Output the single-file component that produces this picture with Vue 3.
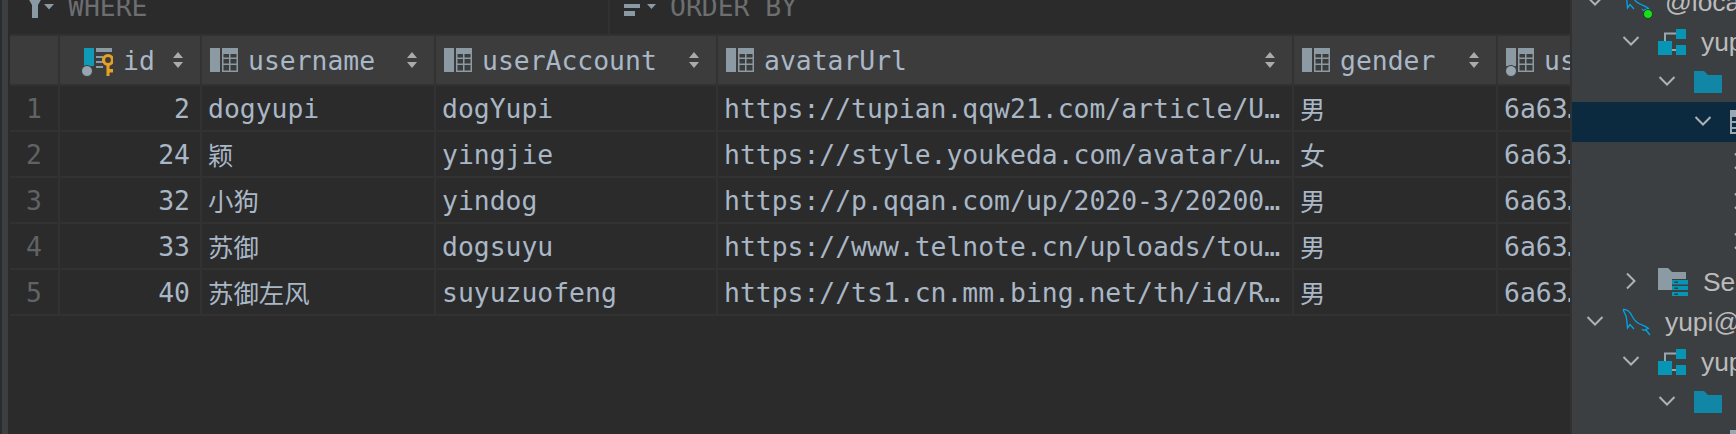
<script setup>
const columns = [
  { name: 'id', kind: 'pk' },
  { name: 'username', kind: 'col' },
  { name: 'userAccount', kind: 'col' },
  { name: 'avatarUrl', kind: 'col' },
  { name: 'gender', kind: 'col' },
  { name: 'userPassword', kind: 'req' }
]

const rows = [
  [2, 'dogyupi', 'dogYupi', 'https://tupian.qqw21.com/article/U…', '男', '6a63…'],
  [24, '颖', 'yingjie', 'https://style.youkeda.com/avatar/u…', '女', '6a63…'],
  [32, '小狗', 'yindog', 'https://p.qqan.com/up/2020-3/20200…', '男', '6a63…'],
  [33, '苏御', 'dogsuyu', 'https://www.telnote.cn/uploads/tou…', '男', '6a63…'],
  [40, '苏御左风', 'suyuzuofeng', 'https://ts1.cn.mm.bing.net/th/id/R…', '男', '6a63…']
]

const tree = [
  { depth: 0, open: true, icon: 'mysql', dot: true, text: '@localhost' },
  { depth: 1, open: true, icon: 'schema', text: 'yupi' },
  { depth: 2, open: true, icon: 'folder' },
  { depth: 3, open: true, icon: 'table', selected: true },
  { depth: 4 },
  { depth: 4 },
  { depth: 4 },
  { depth: 1, icon: 'server', text: 'Server Objects' },
  { depth: 0, open: true, icon: 'mysql', text: 'yupi@localhost' },
  { depth: 1, open: true, icon: 'schema', text: 'yupi' },
  { depth: 2, open: true, icon: 'folder' },
  { depth: 3, open: true, icon: 'table' }
]

const isCjk = (val) => /[\u4e00-\u9fff]/.test(String(val))
</script>

<template>
  <div class="page">
    <div class="stripe"></div>

    <div class="main">
      <div class="filters">
        <div class="filter where">
          <svg class="filter-icon" width="28" height="24" viewBox="0 0 28 24">
            <path d="M0 -6H15V-2L11 5V18H5V5L1 -2Z" fill="#8a9aa5" />
            <path d="M17 4H27L22 9.500Z" fill="#8a9aa5" />
          </svg>
          <span>WHERE</span>
        </div>
        <div class="filter">
          <svg class="filter-icon" width="33" height="24" viewBox="0 0 33 24">
            <path d="M0 4H16V8H0ZM0 11H11V16H0Z" fill="#8a9aa5" />
            <path d="M23 4H32L27.500 9Z" fill="#8a9aa5" />
          </svg>
          <span>ORDER BY</span>
        </div>
      </div>

      <div class="grid">
        <div class="cell head corner"></div>
        <div v-for="col in columns" :key="col.name" class="cell head" :class="{ 'head-pk': col.kind === 'pk' }">
          <svg v-if="col.kind === 'pk'" class="col-icon pk-icon" width="31" height="30" viewBox="0 0 31 30">
            <rect x="2" y="0" width="10" height="18" fill="#0f9ab8" />
            <circle cx="5" cy="23" r="5.500" fill="#95a6b0" stroke="#3c3c3c" stroke-width="1" />
            <path d="M14 0H30V4H14ZM14 8H21V10H14ZM14 13H21V15H14ZM14 18H21V20H14Z" fill="#8b9aa3" />
            <circle cx="26" cy="12" r="4.500" fill="none" stroke="#e5a125" stroke-width="3.200" />
            <path d="M24.500 16H27.500V28H24.500ZM27 21H31V24.500H27Z" fill="#e5a125" />
          </svg>
          <svg v-else class="col-icon" width="28" height="30" viewBox="0 0 28 30">
            <rect x="0" :height="col.kind === 'req' ? 18 : 24" width="10" fill="#8b9aa3" />
            <circle v-if="col.kind === 'req'" cx="5" cy="23" r="5.500" fill="#95a6b0" stroke="#3c3c3c" stroke-width="1" />
            <path d="M12 0H28V24H12ZM13.500 6V9.500H19V6ZM20.500 6V9.500H26.500V6ZM13.500 11V15.500H19V11ZM20.500 11V15.500H26.500V11ZM13.500 17V22.500H19V17ZM20.500 17V22.500H26.500V17Z" fill="#8b9aa3" fill-rule="evenodd" />
          </svg>
          <span class="head-name">{{ col.name }}</span>
          <svg class="sort" width="10" height="16" viewBox="0 0 10 16">
            <path d="M5 0L10 6H0ZM0 10H10L5 16Z" fill="#a9abad" />
          </svg>
        </div>

        <template v-for="(row, i) in rows" :key="i">
          <div class="cell row-no">{{ i + 1 }}</div>
          <div
            v-for="(val, j) in row"
            :key="j"
            class="cell"
            :class="{ num: j === 0, cjk: isCjk(val) }"
          >{{ val }}</div>
        </template>
      </div>
    </div>

    <div class="tree">
      <div
        v-for="(node, i) in tree"
        :key="i"
        class="tree-row"
        :class="{ selected: node.selected }"
        :style="{ paddingLeft: 14 + node.depth * 36 + 'px' }"
      >
        <svg class="chevron" width="18" height="18" viewBox="0 0 18 18">
          <path v-if="node.open" d="M1.500 5L9 12.500L16.500 5" />
          <path v-else d="M5 1.500L12.500 9L5 16.500" />
        </svg>

        <svg v-if="node.icon === 'mysql'" class="node-icon" width="28" height="28" viewBox="0 0 28 28">
          <path
            d="M1 1.500C5 1 8 4 10 8C12 12 15 15 19 16.500C21 17.500 24 18 26.500 20.500L23.500 21.500L28 27M23.500 21.500C22 23 21 22.500 20 21M1 1.500L4 8C5 12 5 15 5.500 20L8 16.500L12 21"
            fill="none"
            stroke="#00a5e6"
            stroke-width="1.300"
          />
          <circle v-if="node.dot" cx="26" cy="26" r="4.500" fill="#16e016" stroke="#2d3a2d" stroke-width="1" />
        </svg>
        <svg v-else-if="node.icon === 'schema'" class="node-icon" width="28" height="26" viewBox="0 0 28 26">
          <path d="M7 12V4.500H18M14 21H18" fill="none" stroke="#9aa7b0" stroke-width="2" />
          <path d="M0 12H14V26H0ZM18 0H28V10H18ZM18 16H28V26H18Z" fill="#0795b5" />
        </svg>
        <svg v-else-if="node.icon === 'folder'" class="node-icon" width="28" height="22" viewBox="0 0 28 22">
          <path d="M0 0H10L14 4H28V22H0Z" fill="#1286a6" />
        </svg>
        <svg v-else-if="node.icon === 'table'" class="node-icon" width="28" height="24" viewBox="0 0 28 24">
          <path d="M0 0H28V24H0ZM2 7V11H7V7ZM2 13V17H7V13ZM2 19V22H7V19Z" fill="#9aa7b0" fill-rule="evenodd" />
        </svg>
        <svg v-else-if="node.icon === 'server'" class="node-icon" width="30" height="28" viewBox="0 0 30 28">
          <path d="M0 0H10L14 4H28V11H14V22H0Z" fill="#8b9aa3" />
          <path d="M14 12H30V16.500H14ZM14 18H30V22H14ZM14 24H30V28H14Z" fill="#0795b5" />
          <path d="M16.500 13.500H20V15H16.500ZM16.500 19.500H20V21H16.500ZM16.500 25.500H20V27H16.500Z" fill="#2d3a40" />
        </svg>

        <span v-if="node.text" class="node-text">{{ node.text }}</span>
      </div>
    </div>
  </div>
</template>

<style>
html,
body {
  margin: 0;
  background: #2b2b2b;
}
</style>

<style scoped>
.page {
  display: flex;
  width: 1736px;
  height: 434px;
  overflow: hidden;
  background: #2b2b2b;
  font-family: "DejaVu Sans Mono", "Noto Sans CJK SC", monospace;
  font-size: 26.4px;
  color: #a9b7c6;
}

.stripe {
  flex: none;
  width: 6px;
  margin-left: 2px;
  margin-right: 2px;
  background: #3c3f41;
}

.main {
  flex: none;
  width: 1560px;
  border-right: 2px solid #313131;
  overflow: hidden;
}

.filters {
  display: flex;
  height: 34px;
  border-bottom: 2px solid #323232;
  overflow: hidden;
}

.filter {
  display: flex;
  align-items: center;
  height: 34px;
  box-sizing: border-box;
  padding: 0 0 22px 14px;
  color: #6c6e70;
}

.where {
  width: 600px;
  padding-left: 17px;
  border-right: 2px solid #313131;
}

.filter-icon {
  flex: none;
  overflow: visible;
  margin-right: 13px;
  margin-top: 12px;
}

.grid {
  display: grid;
  grid-template-columns: 48px 140px 232px 280px 574px 202px 72px;
  grid-template-rows: 48px repeat(5, 44px);
  gap: 2px;
  padding-bottom: 2px;
  background: #323232;
}

.cell {
  display: flex;
  align-items: center;
  min-width: 0;
  padding-left: 6px;
  overflow: hidden;
  white-space: nowrap;
  background: #2b2b2b;
}

.cjk {
  font-size: 25.4px;
}

.num {
  justify-content: flex-end;
  padding-right: 10px;
}

.row-no {
  justify-content: center;
  padding-left: 0;
  color: #606366;
}

.head {
  padding-left: 8px;
  padding-right: 17px;
  background: #3c3c3c;
}

.head-pk {
  padding-left: 22px;
}

.corner {
  padding: 0;
}

.col-icon {
  flex: none;
  margin-right: 10px;
  margin-top: 6px;
}

.head-name {
  flex: none;
}

.sort {
  flex: none;
  margin-left: auto;
}

.tree {
  flex: none;
  width: 164px;
  margin-top: -18px;
  background: #3c3f41;
  font-family: "Liberation Sans", "Noto Sans CJK SC", sans-serif;
  font-size: 26.4px;
  color: #bbbbbb;
}

.tree-row {
  display: flex;
  align-items: center;
  height: 40px;
  white-space: nowrap;
}

.selected {
  background: #0b2a3f;
}

.chevron {
  flex: none;
  margin-right: 18px;
  margin-top: -2px;
}

.chevron path {
  fill: none;
  stroke: #afb1b3;
  stroke-width: 2;
}

.node-icon {
  flex: none;
  margin-right: 15px;
  overflow: visible;
}

.node-text {
  flex: none;
}
</style>
